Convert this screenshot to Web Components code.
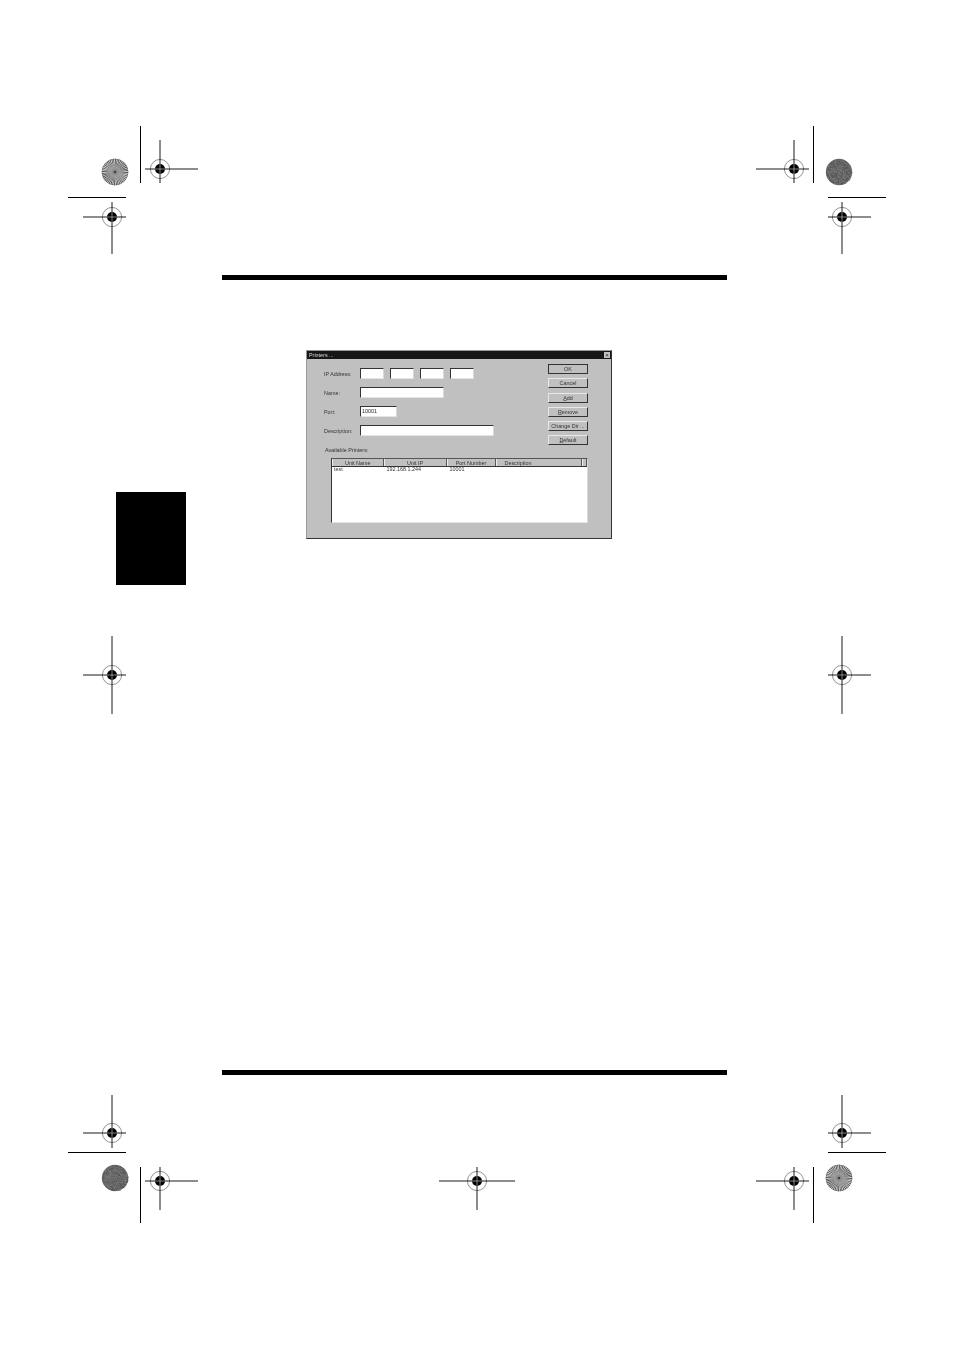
<!DOCTYPE html>
<html>
<head>
<meta charset="utf-8">
<title>Printers</title>
<style>
  html, body { margin: 0; padding: 0; background: #fff; }
</style>
</head>
<body>
<print-sheet>
  <win-dialog slot="figure" title="Printers ..."></win-dialog>
</print-sheet>

<script>
// crop mark: crosshair with bullseye, arms are given as up/right/down/left lengths
class RegMark extends HTMLElement {
  connectedCallback() {
    const x = +this.getAttribute("x"), y = +this.getAttribute("y");
    const [u, r, d, l] = this.getAttribute("arms").split(",").map(Number);
    const pad = 40;
    this.attachShadow({ mode: "open" }).innerHTML = `
      <style>
        :host { position: absolute; left: ${x - pad}px; top: ${y - pad}px; width: ${pad * 2}px; height: ${pad * 2}px; }
        svg { display: block; overflow: visible; }
      </style>
      <svg width="${pad * 2}" height="${pad * 2}" viewBox="${-pad} ${-pad} ${pad * 2} ${pad * 2}">
        <circle r="9.6" fill="#fff" stroke="#777" stroke-width=".8"/>
        <path d="M0 ${-u}V${d}M${-l} 0H${r}" stroke="#000" stroke-width=".9" fill="none"/>
        <circle r="5" fill="#000"/>
        <path d="M0 -5V5M-5 0H5" stroke="#fff" stroke-width=".5" fill="none"/>
      </svg>`;
  }
}
customElements.define("reg-mark", RegMark);

// colour target disc, sunburst or grainy grey
class ColorDisc extends HTMLElement {
  connectedCallback() {
    const x = +this.getAttribute("x"), y = +this.getAttribute("y");
    const R = 13.2;
    let body = "";
    if (this.getAttribute("kind") === "burst") {
      const n = 44;
      let p = "";
      for (let i = 0; i < n; i++) {
        const a = (i / n) * Math.PI * 2, b = ((i + 0.5) / n) * Math.PI * 2;
        p += `M0 0L${(R * Math.cos(a)).toFixed(2)} ${(R * Math.sin(a)).toFixed(2)}L${(R * Math.cos(b)).toFixed(2)} ${(R * Math.sin(b)).toFixed(2)}Z`;
      }
      body = `<circle r="${R}" fill="#e0e0e0"/><path d="${p}" fill="#444"/>
        <circle r="6.5" fill="url(#mid)"/><circle r=".9" fill="#222"/>
        <circle r="${R - .2}" fill="none" stroke="#666" stroke-width=".5"/>`;
    } else {
      let seed = x * 7 + y, dots = "";
      const rnd = () => (seed = (seed * 16807) % 2147483647) / 2147483647;
      for (let i = 0; i < 260; i++) {
        const a = rnd() * Math.PI * 2, d = Math.sqrt(rnd()) * (R - .6);
        const c = rnd() > .5 ? "#7c7c7c" : "#505050";
        dots += `<rect x="${(d * Math.cos(a)).toFixed(1)}" y="${(d * Math.sin(a)).toFixed(1)}" width="1" height="1" fill="${c}"/>`;
      }
      body = `<circle r="${R}" fill="#666"/>${dots}`;
    }
    this.attachShadow({ mode: "open" }).innerHTML = `
      <style>
        :host { position: absolute; left: ${x - 15}px; top: ${y - 15}px; width: 30px; height: 30px; }
        svg { display: block; }
      </style>
      <svg width="30" height="30" viewBox="-15 -15 30 30">
        <defs><radialGradient id="mid"><stop offset="0" stop-color="#777"/><stop offset=".6" stop-color="#999"/><stop offset="1" stop-color="#aaa" stop-opacity="0"/></radialGradient></defs>
        ${body}
      </svg>`;
  }
}
customElements.define("color-disc", ColorDisc);

// plain hairline of the crop marks
class TrimLine extends HTMLElement {
  connectedCallback() {
    const [x, y, w, h] = this.getAttribute("box").split(",");
    this.attachShadow({ mode: "open" }).innerHTML = `
      <style>
        :host { position: absolute; left: ${x}px; top: ${y}px; width: ${w}px; height: ${h}px; background: #000; }
      </style>`;
  }
}
customElements.define("trim-line", TrimLine);

class WinField extends HTMLElement {
  constructor() {
    super();
    this.attachShadow({ mode: "open" }).innerHTML = `
      <style>
        :host { display: block; box-sizing: border-box; height: 11px; background: #fff;
          border-top: 1px solid #333; border-left: 1px solid #333;
          border-right: 1px solid #d8d8d8; border-bottom: 1px solid #e4e4e4;
          font: 5.4px/8px "Liberation Sans", sans-serif; color: #222; padding-left: 1px; }
      </style><slot></slot>`;
  }
}
customElements.define("win-field", WinField);

class WinButton extends HTMLElement {
  constructor() {
    super();
    this.attachShadow({ mode: "open" }).innerHTML = `
      <style>
        :host { display: flex; align-items: center; justify-content: center; box-sizing: border-box;
          height: 10px; width: 40px; background: #c0c0c0;
          border-top: 1px solid #e8e8e8; border-left: 1px solid #e8e8e8;
          border-right: 1px solid #333; border-bottom: 1px solid #333;
          font: 5.4px/8px "Liberation Sans", sans-serif; color: #333; }
        :host([default]) { border-color: #333; border-bottom-width: 1.4px; border-right-width: 1.4px; }
        span { display: block; }
      </style><span><slot></slot></span>`;
  }
}
customElements.define("win-button", WinButton);

class WinList extends HTMLElement {
  constructor() {
    super();
    this.attachShadow({ mode: "open" }).innerHTML = `
      <style>
        :host { display: block; box-sizing: border-box; width: 257px; height: 65px; margin-left: 24px;
          background: #fff; border-top: 1px solid #555; border-left: 1px solid #333;
          border-right: 1px solid #d8d8d8; border-bottom: 1px solid #e4e4e4;
          font: 5.4px/7px "Liberation Sans", sans-serif; color: #333; }
        .cols { display: grid; grid-template-columns: 51.5px 63px 49px 86px 1fr; }
        .head { height: 7px; background: #c0c0c0; border-bottom: 1px solid #333; box-sizing: content-box; }
        .head span { border-left: 1px solid #eee; border-right: 1px solid #555; box-sizing: border-box;
          line-height: 8px; height: 7px; text-align: center; }
        .head span.desc { text-align: left; padding-left: 8px; }
        .row span { padding-left: 2px; line-height: 5px; white-space: nowrap; }
        .row span:nth-child(2), .row span:nth-child(3) { padding-left: 3px; }
      </style>
      <div class="cols head"><span>Unit Name</span><span>Unit IP</span><span>Port Number</span><span class="desc">Description</span><span></span></div>
      <div class="cols row"><span>test</span><span>192.168.1.244</span><span>10001</span><span></span><span></span></div>`;
  }
}
customElements.define("win-list", WinList);

class WinDialog extends HTMLElement {
  constructor() {
    super();
    this.attachShadow({ mode: "open" }).innerHTML = `
      <style>
        :host { display: block; box-sizing: border-box; width: 306px; height: 189px; background: #c0c0c0;
          border: 1px solid #444; border-color: #999 #333 #333 #999;
          font: 5.4px/8px "Liberation Sans", sans-serif; color: #333; filter: blur(.35px); }
        .title { display: flex; align-items: center; justify-content: space-between; height: 8px;
          background: #161616; color: #ddd; padding: 0 1px 0 2px; }
        .close { width: 6px; height: 6px; background: #c0c0c0; color: #222; font: 6px/6px "Liberation Sans", sans-serif; text-align: center; }
        .main { display: flex; }
        .form { width: 241px; padding: 9px 0 0 17px; box-sizing: border-box; }
        .line { display: grid; grid-template-columns: 36px 1fr; align-items: center; height: 11px; margin-bottom: 8px; }
        .ip { display: flex; gap: 6px; }
        .ip win-field { width: 24px; }
        .buttons { display: flex; flex-direction: column; gap: 4.3px; padding-top: 5px; }
        .avail { margin: 1px 0 4px 18px; height: 8px; }
        u { text-decoration-thickness: .4px; text-underline-offset: .2px; text-decoration-color: #777; }
      </style>
      <div class="title"><span id="t"></span><span class="close">×</span></div>
      <div class="main">
        <div class="form">
          <div class="line"><span>IP Address:</span><div class="ip"><win-field></win-field><win-field></win-field><win-field></win-field><win-field></win-field></div></div>
          <div class="line"><span>Name:</span><win-field style="width:84px"></win-field></div>
          <div class="line"><span>Port:</span><win-field style="width:37px">10001</win-field></div>
          <div class="line"><span>Description:</span><win-field style="width:134px"></win-field></div>
        </div>
        <div class="buttons">
          <win-button default>OK</win-button>
          <win-button>Cancel</win-button>
          <win-button><u>A</u>dd</win-button>
          <win-button><u>R</u>emove</win-button>
          <win-button>Change Dir ...</win-button>
          <win-button><u>D</u>efault</win-button>
        </div>
      </div>
      <div class="avail">Available Printers:</div>
      <win-list></win-list>`;
    this.shadowRoot.getElementById("t").textContent = this.getAttribute("title") || "";
  }
}
customElements.define("win-dialog", WinDialog);

class PrintSheet extends HTMLElement {
  constructor() {
    super();
    const marks = [
      [160,169,"29,38,14,15"], [112,217,"15,14,37,29"], [794.3,169,"29,15,14,38"], [842.3,217,"15,29,37,14"],
      [112,675.3,"39,14,39,29"], [842.3,675.3,"39,29,39,14"],
      [112,1133,"38,14,15,29"], [842.3,1133,"38,29,15,14"],
      [160,1181,"14,38,29,15"], [794.3,1181,"14,15,29,38"], [477.3,1181,"14,38,29,38"]
    ].map(m => `<reg-mark x="${m[0]}" y="${m[1]}" arms="${m[2]}"></reg-mark>`).join("");
    const lines = ["140,126,1,57","813,126,1,57","68,197,58,1","828,197,58,1",
      "68,1152,58,1","828,1152,58,1","140,1167,1,56","813,1167,1,56"]
      .map(b => `<trim-line box="${b}"></trim-line>`).join("");
    this.attachShadow({ mode: "open" }).innerHTML = `
      <style>
        :host { display: block; position: relative; width: 954px; height: 1350px; background: #fff; overflow: hidden; box-sizing: border-box; padding-top: 275px; }
        .rule { height: 5px; width: 505px; margin-left: 222px; background: #000; }
        .middle { display: flex; height: 790px; }
        .tab { width: 70px; height: 93px; margin: 212px 0 0 116px; background: #000; flex: none; }
        .figure { margin: 70px 0 0 120px; }
      </style>
      <div class="rule"></div>
      <div class="middle">
        <div class="tab"></div>
        <div class="figure"><slot name="figure"></slot></div>
      </div>
      <div class="rule"></div>
      ${lines}${marks}
      <color-disc kind="burst" x="115" y="172"></color-disc>
      <color-disc kind="grain" x="839.3" y="172"></color-disc>
      <color-disc kind="grain" x="115" y="1178"></color-disc>
      <color-disc kind="burst" x="839.3" y="1178"></color-disc>`;
  }
}
customElements.define("print-sheet", PrintSheet);
</script>
</body>
</html>
